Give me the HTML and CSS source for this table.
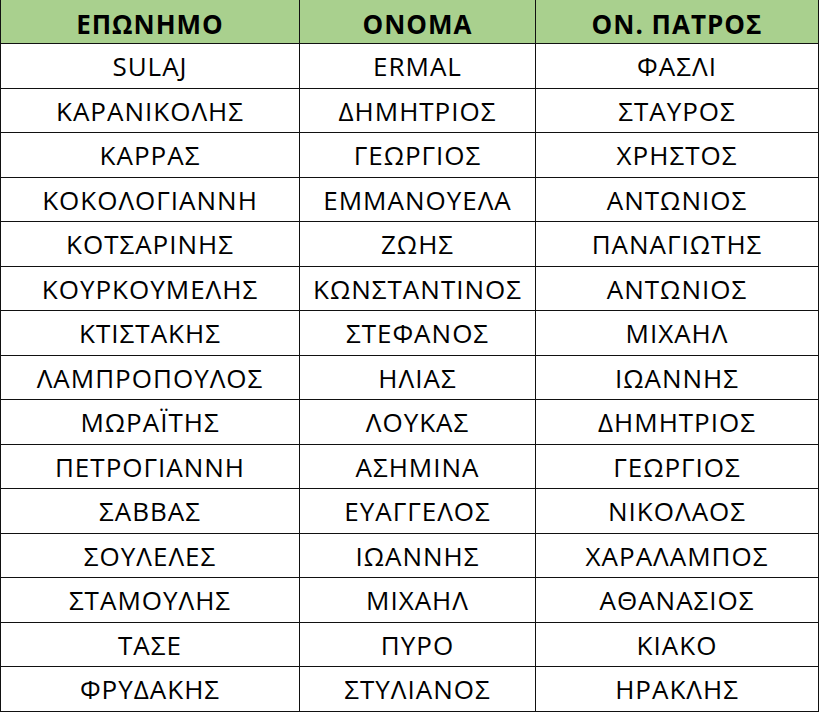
FILE: index.html
```html
<!DOCTYPE html>
<html lang="el">
<head>
<meta charset="utf-8">
<link rel="stylesheet" href="styles.css">
</head>
<body>
<div class="sheet">
  <div class="cell head">ΕΠΩΝΗΜΟ</div><div class="cell head">ΟΝΟΜΑ</div><div class="cell head">ΟΝ. ΠΑΤΡΟΣ</div>
  <div class="cell">SULAJ</div><div class="cell">ERMAL</div><div class="cell">ΦΑΣΛΙ</div>
  <div class="cell">ΚΑΡΑΝΙΚΟΛΗΣ</div><div class="cell">ΔΗΜΗΤΡΙΟΣ</div><div class="cell">ΣΤΑΥΡΟΣ</div>
  <div class="cell">ΚΑΡΡΑΣ</div><div class="cell">ΓΕΩΡΓΙΟΣ</div><div class="cell">ΧΡΗΣΤΟΣ</div>
  <div class="cell">ΚΟΚΟΛΟΓΙΑΝΝΗ</div><div class="cell">ΕΜΜΑΝΟΥΕΛΑ</div><div class="cell">ΑΝΤΩΝΙΟΣ</div>
  <div class="cell">ΚΟΤΣΑΡΙΝΗΣ</div><div class="cell">ΖΩΗΣ</div><div class="cell">ΠΑΝΑΓΙΩΤΗΣ</div>
  <div class="cell">ΚΟΥΡΚΟΥΜΕΛΗΣ</div><div class="cell">ΚΩΝΣΤΑΝΤΙΝΟΣ</div><div class="cell">ΑΝΤΩΝΙΟΣ</div>
  <div class="cell">ΚΤΙΣΤΑΚΗΣ</div><div class="cell">ΣΤΕΦΑΝΟΣ</div><div class="cell">ΜΙΧΑΗΛ</div>
  <div class="cell">ΛΑΜΠΡΟΠΟΥΛΟΣ</div><div class="cell">ΗΛΙΑΣ</div><div class="cell">ΙΩΑΝΝΗΣ</div>
  <div class="cell">ΜΩΡΑΪΤΗΣ</div><div class="cell">ΛΟΥΚΑΣ</div><div class="cell">ΔΗΜΗΤΡΙΟΣ</div>
  <div class="cell">ΠΕΤΡΟΓΙΑΝΝΗ</div><div class="cell">ΑΣΗΜΙΝΑ</div><div class="cell">ΓΕΩΡΓΙΟΣ</div>
  <div class="cell">ΣΑΒΒΑΣ</div><div class="cell">ΕΥΑΓΓΕΛΟΣ</div><div class="cell">ΝΙΚΟΛΑΟΣ</div>
  <div class="cell">ΣΟΥΛΕΛΕΣ</div><div class="cell">ΙΩΑΝΝΗΣ</div><div class="cell">ΧΑΡΑΛΑΜΠΟΣ</div>
  <div class="cell">ΣΤΑΜΟΥΛΗΣ</div><div class="cell">ΜΙΧΑΗΛ</div><div class="cell">ΑΘΑΝΑΣΙΟΣ</div>
  <div class="cell">ΤΑΣΕ</div><div class="cell">ΠΥΡΟ</div><div class="cell">ΚΙΑΚΟ</div>
  <div class="cell">ΦΡΥΔΑΚΗΣ</div><div class="cell">ΣΤΥΛΙΑΝΟΣ</div><div class="cell">ΗΡΑΚΛΗΣ</div>
</div>
</body>
</html>
```

FILE: styles.css
```css
html, body {
  margin: 0;
  padding: 0;
  background: #fff;
}
.sheet {
  display: grid;
  grid-template-columns: 298px 235px 282px;
  grid-template-rows: 43px;
  grid-auto-rows: 43.53px;
  gap: 1px;
  padding: 0 1px 1px 1px;
  width: 817px;
  background: #111;
  font-family: "Open Sans", "DejaVu Sans", sans-serif;
  font-size: 26px;
  letter-spacing: 1px;
  color: #000;
}
.cell {
  background: #fff;
  display: flex;
  align-items: center;
  justify-content: center;
  padding-top: 1px;
  box-sizing: border-box;
  white-space: nowrap;
  line-height: 1;
}
.head {
  background: #a9d08e;
  font-weight: 700;
  padding-top: 4px;
}
```
